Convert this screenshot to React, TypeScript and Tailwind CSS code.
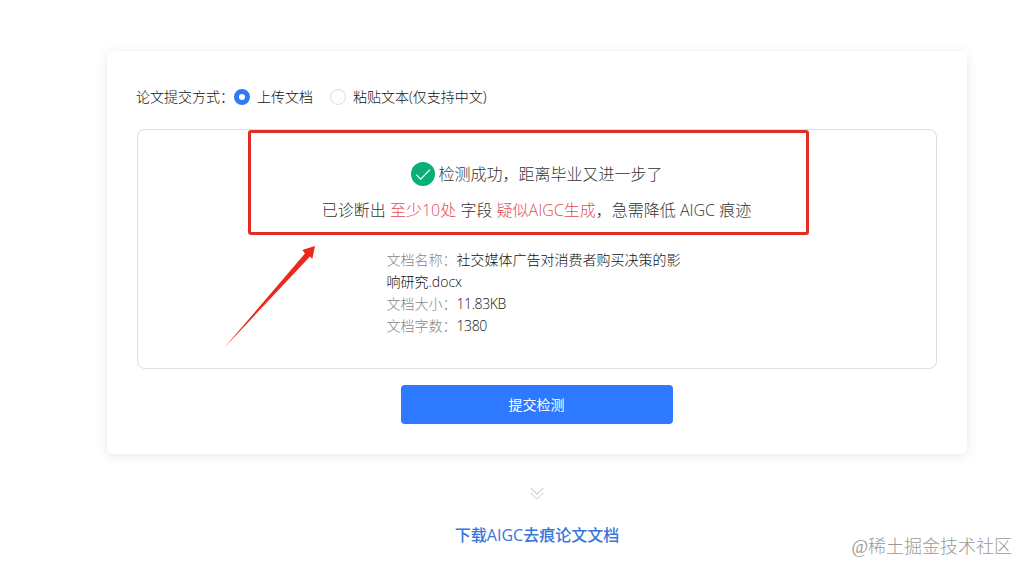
import React, { useState } from "react";

const docInfo = [
  { label: "文档名称：", value: "社交媒体广告对消费者购买决策的影响研究.docx" },
  { label: "文档大小：", value: "11.83KB" },
  { label: "文档字数：", value: "1380" },
];

interface RadioProps {
  checked: boolean;
  label: string;
  onChange: () => void;
}

const Radio: React.FC<RadioProps> = ({ checked, label, onChange }) => {
  return (
    <label className="flex cursor-pointer items-center gap-[7px]">
      <input type="radio" className="sr-only" checked={checked} onChange={onChange} />
      <span
        className={
          checked
            ? "h-4 w-4 rounded-full border-5 border-[#2f7af5] bg-white"
            : "h-4 w-4 rounded-full border border-[#dcdee2] bg-white"
        }
      />
      <span>{label}</span>
    </label>
  );
};

const App: React.FC = () => {
  const [mode, setMode] = useState("file");

  return (
    <div className="relative h-[563px] w-[1018px] overflow-hidden bg-white pl-[107px] pt-[51px] font-['Open_Sans','Noto_Sans_CJK_SC',sans-serif] text-sm font-light text-[#111]">
      {/* Card */}
      <div className="h-[403px] w-[860px] rounded-md bg-white px-[30px] pt-[35px] shadow-[0_2px_12px_rgba(40,80,80,0.12)]">
        {/* Submit mode */}
        <div className="-ml-px flex h-[22px] items-center leading-[22px]">
          <span className="w-[98px] whitespace-nowrap">论文提交方式：</span>
          <div className="flex items-center gap-[17px]">
            <Radio checked={mode === "file"} label="上传文档" onChange={() => setMode("file")} />
            <Radio
              checked={mode === "text"}
              label="粘贴文本(仅支持中文)"
              onChange={() => setMode("text")}
            />
          </div>
        </div>

        {/* Result */}
        <div className="relative mt-[21px] flex h-60 w-[800px] flex-col items-center rounded-lg border border-[#dcdee2] pt-[26px]">
          <div className="flex h-9 items-center gap-[3px] text-base text-[#333]">
            <svg width="24" height="24" viewBox="0 0 24 24" fill="none">
              <circle cx="12" cy="12" r="12" fill="#08b076" />
              <path d="M5.3 12.6l4.4 4.5 9.3-9.5" stroke="#fff" strokeWidth="1.2" />
            </svg>
            <span>检测成功，距离毕业又进一步了</span>
          </div>
          <p className="-ml-px h-9 whitespace-nowrap text-base leading-9 text-[#333]">
            已诊断出 <span className="text-[#e34d59]">至少10处</span> 字段{" "}
            <span className="text-[#e34d59]">疑似AIGC生成</span>，急需降低 AIGC 痕迹
          </p>
          <div className="-ml-px mt-[21px] w-[300px] leading-[22px]">
            {docInfo.map((item) => (
              <p key={item.label} className="break-all tracking-[-0.01em]">
                <span className="tracking-normal text-[#888]">{item.label}</span>
                <span className={item.value.length > 10 ? "tracking-normal" : "tracking-[-0.4px]"}>
                  {item.value}
                </span>
              </p>
            ))}
          </div>

          {/* Highlight frame */}
          <div className="pointer-events-none absolute left-[110px] top-0 h-[105px] w-[561px] rounded-[3px] border-3 border-[#e02e24]" />
          <svg
            className="pointer-events-none absolute left-[86px] top-[115px]"
            width="94"
            height="104"
            viewBox="0 0 94 104"
          >
            <path d="M0 103L81 8.5 78.3 5 91 1 88.3 14 86 11.5Z" fill="#e8291c" />
          </svg>
        </div>

        <button className="mx-auto mt-4 block h-[39px] w-[272px] rounded bg-[#2d79ff] pr-px text-sm font-normal text-white">
          提交检测
        </button>
      </div>

      {/* Download */}
      <div className="flex w-[860px] flex-col items-center">
        <svg className="mt-8" width="16" height="14" viewBox="0 0 16 14" fill="none">
          <path d="M1.5 2L8 8l6.5-6" stroke="#bbb" />
          <path d="M1.5 7L8 13l6.5-6" stroke="#ccc" />
        </svg>
        <a href="#" className="mt-[23px] text-base font-medium leading-6 text-[#3577dc]">
          下载AIGC去痕论文文档
        </a>
      </div>

      {/* Watermark */}
      <span className="absolute bottom-[3px] right-[6px] whitespace-nowrap font-['Liberation_Serif','Noto_Sans_CJK_SC',serif] text-lg leading-[26px] text-[#999]">
        @稀土掘金技术社区
      </span>
    </div>
  );
};

export default App;
